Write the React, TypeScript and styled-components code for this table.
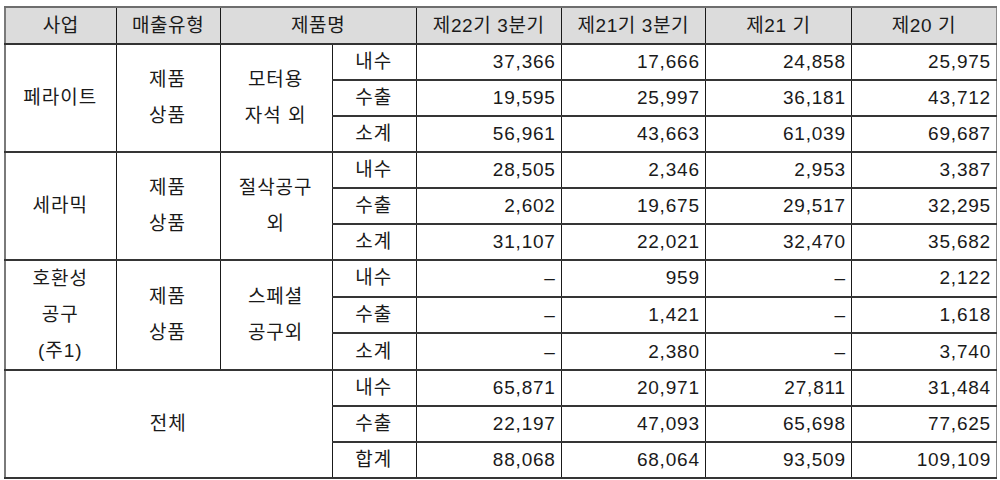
import React from 'react';
import styled, { createGlobalStyle } from 'styled-components';

const GlobalStyle = createGlobalStyle`
  body {
    margin: 0;
    background: #ffffff;
    font-family: "Liberation Sans", "Noto Sans CJK KR", sans-serif;
    color: #1a1a1a;
  }
`;

const Page = styled.div`
  padding: 6px 0 0 4px;
`;

const Table = styled.table`
  border-collapse: collapse;
  table-layout: fixed;
  width: 993px;
  border-top: 2px solid #6e6e6e;
  border-left: 2px solid #7a7a7a;
  border-right: 1px solid #8a8a8a;
  border-bottom: 2px solid #8a8a8a;
  font-size: 19px;
`;

const Head = styled.th`
  height: 35px;
  padding: 0;
  background: #dcdcdc;
  font-weight: normal;
  text-align: center;
  line-height: 20px;
  letter-spacing: 0.6px;
  border-bottom: 2px solid #333333;
  border-right: 1px solid #1a1a1a;
  white-space: nowrap;
  &:last-child {
    border-right: none;
  }
`;

const Cell = styled.td<{ $align?: 'left' | 'center' | 'right' }>`
  height: 34px;
  padding: 0 5px 0 4px;
  text-align: ${(p) => p.$align ?? 'center'};
  border-bottom: 2px solid #353535;
  border-right: 1px solid #1a1a1a;
  line-height: 20px;
  letter-spacing: ${(p) => (p.$align === 'right' ? '0.8px' : '1px')};
  white-space: nowrap;
  &:last-child {
    border-right: none;
  }
`;

const Stack = styled.div`
  line-height: 36px;
  white-space: normal;
`;

type Group = {
  name: string[];
  type: string[];
  product: string[];
  rows: { label: string; values: string[] }[];
};

const groups: Group[] = [
  {
    name: ['페라이트'],
    type: ['제품', '상품'],
    product: ['모터용', '자석 외'],
    rows: [
      { label: '내수', values: ['37,366', '17,666', '24,858', '25,975'] },
      { label: '수출', values: ['19,595', '25,997', '36,181', '43,712'] },
      { label: '소계', values: ['56,961', '43,663', '61,039', '69,687'] },
    ],
  },
  {
    name: ['세라믹'],
    type: ['제품', '상품'],
    product: ['절삭공구', '외'],
    rows: [
      { label: '내수', values: ['28,505', '2,346', '2,953', '3,387'] },
      { label: '수출', values: ['2,602', '19,675', '29,517', '32,295'] },
      { label: '소계', values: ['31,107', '22,021', '32,470', '35,682'] },
    ],
  },
  {
    name: ['호환성', '공구', '(주1)'],
    type: ['제품', '상품'],
    product: ['스페셜', '공구외'],
    rows: [
      { label: '내수', values: ['–', '959', '–', '2,122'] },
      { label: '수출', values: ['–', '1,421', '–', '1,618'] },
      { label: '소계', values: ['–', '2,380', '–', '3,740'] },
    ],
  },
];

const totals = [
  { label: '내수', values: ['65,871', '20,971', '27,811', '31,484'] },
  { label: '수출', values: ['22,197', '47,093', '65,698', '77,625'] },
  { label: '합계', values: ['88,068', '68,064', '93,509', '109,109'] },
];

const widths = [111, 104, 112, 84, 145, 144, 146, 145];

function Lines({ items }: { items: string[] }) {
  return (
    <Stack>
      {items.map((t) => (
        <div key={t}>{t}</div>
      ))}
    </Stack>
  );
}

export default function App() {
  return (
    <Page>
      <GlobalStyle />
      <Table>
        <colgroup>
          {widths.map((w, i) => (
            <col key={i} style={{ width: w }} />
          ))}
        </colgroup>
        <thead>
          <tr>
            <Head>사업</Head>
            <Head>매출유형</Head>
            <Head colSpan={2}>제품명</Head>
            <Head>제22기 3분기</Head>
            <Head>제21기 3분기</Head>
            <Head>제21 기</Head>
            <Head>제20 기</Head>
          </tr>
        </thead>
        <tbody>
          {groups.map((g) =>
            g.rows.map((r, i) => (
              <tr key={g.name[0] + r.label}>
                {i === 0 && (
                  <>
                    <Cell rowSpan={3}>
                      <Lines items={g.name} />
                    </Cell>
                    <Cell rowSpan={3}>
                      <Lines items={g.type} />
                    </Cell>
                    <Cell rowSpan={3}>
                      <Lines items={g.product} />
                    </Cell>
                  </>
                )}
                <Cell>{r.label}</Cell>
                {r.values.map((v, j) => (
                  <Cell key={j} $align="right">
                    {v}
                  </Cell>
                ))}
              </tr>
            ))
          )}
          {totals.map((r, i) => (
            <tr key={'t' + r.label}>
              {i === 0 && (
                <Cell rowSpan={3} colSpan={3}>
                  전체
                </Cell>
              )}
              <Cell>{r.label}</Cell>
              {r.values.map((v, j) => (
                <Cell key={j} $align="right">
                  {v}
                </Cell>
              ))}
            </tr>
          ))}
        </tbody>
      </Table>
    </Page>
  );
}
